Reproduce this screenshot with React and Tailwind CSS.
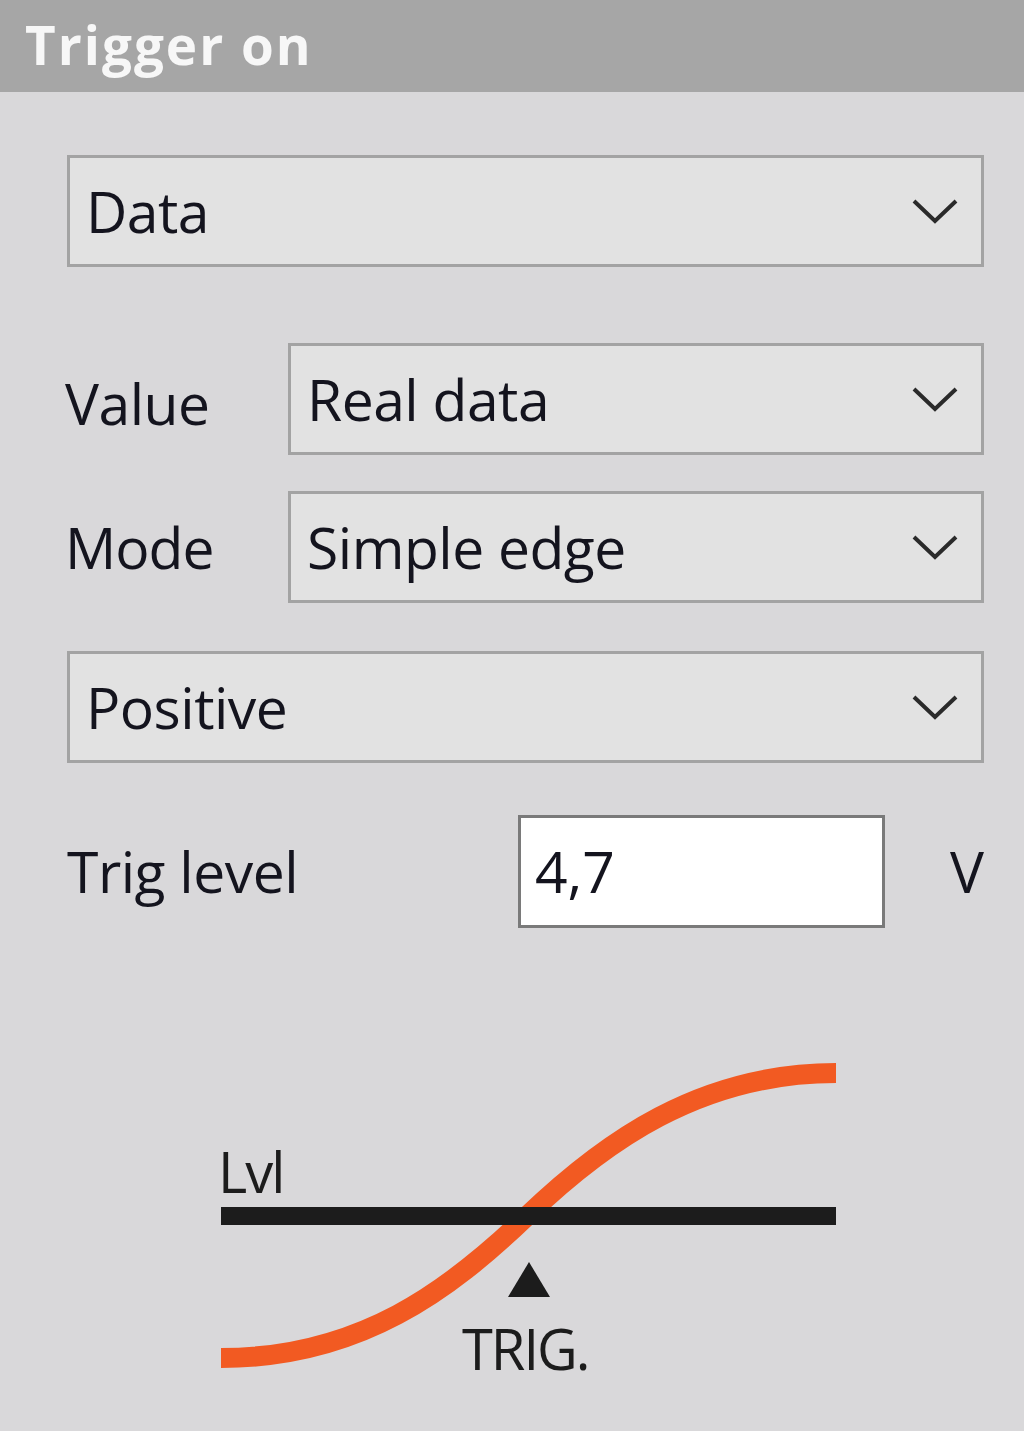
import React from "react";

const font = { fontFamily: '"Open Sans", "Noto Sans", "Liberation Sans", sans-serif' };

function Chevron() {
  return (
    <svg width="48" height="28" viewBox="0 0 48 28" className="shrink-0">
      <path d="M3 4 L24 24 L45 4" fill="none" stroke="#2a2a2a" strokeWidth="4" strokeLinejoin="miter" />
    </svg>
  );
}

function Dropdown({ text, className = "" }) {
  return (
    <div
      className={
        "flex h-[112px] items-center justify-between border-[3px] border-[#a3a3a3] bg-[#e2e2e2] pl-[16px] pr-[22px] " +
        className
      }
    >
      <span className="text-[57px] leading-none text-[#14141e] tracking-[-0.5px]">{text}</span>
      <Chevron />
    </div>
  );
}

export default function App() {
  return (
    <div className="flex h-[1431px] w-[1024px] flex-col bg-[#d9d8da]" style={font}>
      <div className="flex h-[92px] shrink-0 items-center bg-[#a6a6a6] pl-[25px]">
        <span className="text-[53px] font-bold leading-none text-[#f7f7f7] tracking-[2px] pb-[4px]">
          Trigger on
        </span>
      </div>

      <div className="flex flex-col pl-[65px] pr-[40px]">
        <Dropdown text="Data" className="mt-[63px] ml-[2px]" />

        <div className="mt-[76px] flex items-center">
          <span className="w-[223px] pt-[8px] text-[57px] leading-none text-[#14141e] tracking-[-0.5px]">Value</span>
          <Dropdown text="Real data" className="flex-1" />
        </div>

        <div className="mt-[36px] flex items-center">
          <span className="w-[223px] text-[57px] leading-none text-[#14141e] tracking-[-1px]">Mode</span>
          <Dropdown text="Simple edge" className="flex-1" />
        </div>

        <Dropdown text="Positive" className="mt-[48px] ml-[2px]" />

        <div className="mt-[52px] flex items-center">
          <span className="w-[453px] pl-[2px] text-[57px] leading-none text-[#14141e] tracking-[-0.5px]">Trig level</span>
          <div className="flex h-[113px] w-[367px] items-center border-[3px] border-[#7a7a7a] bg-white pl-[14px]">
            <span className="text-[57px] leading-none text-[#14141e]">4,7</span>
          </div>
          <span className="ml-[65px] text-[57px] leading-none text-[#14141e]">V</span>
        </div>
      </div>

      <div className="mt-[122px] pl-[200px]">
        <svg width="680" height="360" viewBox="200 1050 680 360">
          <path
            d="M221 1358 C360 1358 450 1290 527 1216 C604 1142 700 1073 836 1073"
            fill="none"
            stroke="#f25a22"
            strokeWidth="20"
          />
          <rect x="221" y="1207" width="615" height="18" fill="#1c1c1c" />
          <text x="218" y="1193" fontSize="56" fill="#1c1c1c" letterSpacing="-2" style={font}>
            Lvl
          </text>
          <polygon points="529,1262 508,1297 550,1297" fill="#1c1c1c" />
          <text x="462" y="1370" fontSize="56" fill="#1c1c1c" letterSpacing="-2" style={font}>
            TRIG.
          </text>
        </svg>
      </div>
    </div>
  );
}
